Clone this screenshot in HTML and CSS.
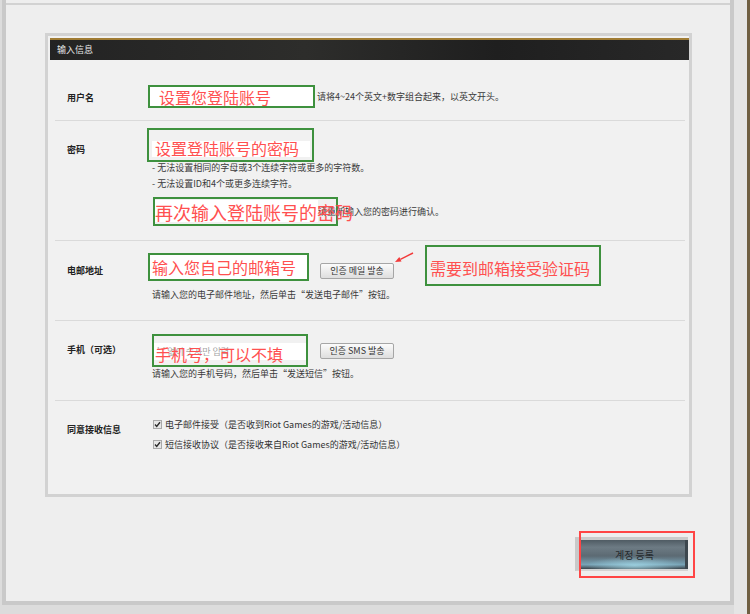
FILE: index.html
```html
<!DOCTYPE html>
<html lang="zh-CN">
<head>
    <meta charset="UTF-8">
    <meta name="viewport" content="width=device-width, initial-scale=1.0">
    <title>输入信息</title>
    <link rel="stylesheet" href="styles.css">
</head>
<body>

<div class="frame">
    <div class="topline"></div>

    <div class="panel">
        <div class="panel-head">输入信息</div>

        <!-- 用户名 -->
        <div class="row row-id">
            <div class="label">用户名</div>
            <div class="field">
                <div class="line">
                    <div class="mark mark-id"><span class="note">设置您登陆账号</span></div>
                    <span class="hint hint-side">请将4~24个英文+数字组合起来，以英文开头。</span>
                </div>
            </div>
        </div>

        <!-- 密码 -->
        <div class="row row-pw">
            <div class="label">密码</div>
            <div class="field">
                <div class="mark mark-pw"><span class="note">设置登陆账号的密码</span></div>
                <div class="bullets">
                    <div>- 无法设置相同的字母或3个连续字符或更多的字符数。</div>
                    <div>- 无法设置ID和4个或更多连续字符。</div>
                </div>
                <div class="line">
                    <div class="mark mark-re"><span class="note note-big">再次输入登陆账号的密码</span></div>
                    <span class="hint hint-under">请重新输入您的密码进行确认。</span>
                </div>
            </div>
        </div>

        <!-- 电邮地址 -->
        <div class="row row-mail">
            <div class="label">电邮地址</div>
            <div class="field">
                <div class="line">
                    <div class="mark mark-mail"><span class="note">输入您自己的邮箱号</span></div>
                    <button class="btn btn-mail">인증 메일 발송</button>
                    <svg class="arrow" width="20" height="12" viewBox="0 0 20 12">
                        <path d="M19 1 L6.4 7.3" stroke="#f23a3a" stroke-width="1.4" fill="none"/>
                        <path d="M1 10 L5.3 5.1 L7.5 9.5 Z" fill="#f23a3a"/>
                    </svg>
                    <div class="mark mark-tip"><span class="note">需要到邮箱接受验证码</span></div>
                </div>
                <div class="hint hint-block hint-mail">请输入您的电子邮件地址，然后单击“发送电子邮件”按钮。</div>
            </div>
        </div>

        <!-- 手机 -->
        <div class="row row-phone">
            <div class="label">手机（可选）</div>
            <div class="field">
                <div class="line">
                    <div class="mark mark-phone">
                        <div class="placeholder">'-' 없이 숫자만 입력</div>
                        <span class="note note-over">手机号，可以不填</span>
                    </div>
                    <button class="btn btn-sms">인증 SMS 발송</button>
                </div>
                <div class="hint hint-block hint-phone">请输入您的手机号码，然后单击“发送短信”按钮。</div>
            </div>
        </div>

        <!-- 同意接收信息 -->
        <div class="row row-agree">
            <div class="label">同意接收信息</div>
            <div class="field">
                <label class="check">
                    <svg width="9" height="9" viewBox="0 0 9 9"><rect x="0.5" y="0.5" width="8" height="8" fill="#e6e6e6" stroke="#a9a9a9"/><path d="M2 4.6 L3.7 6.4 L7 2.2" stroke="#2b2b2b" stroke-width="1.4" fill="none"/></svg>
                    电子邮件接受（是否收到Riot Games的游戏/活动信息）
                </label>
                <label class="check">
                    <svg width="9" height="9" viewBox="0 0 9 9"><rect x="0.5" y="0.5" width="8" height="8" fill="#e6e6e6" stroke="#a9a9a9"/><path d="M2 4.6 L3.7 6.4 L7 2.2" stroke="#2b2b2b" stroke-width="1.4" fill="none"/></svg>
                    短信接收协议（是否接收来自Riot Games的游戏/活动信息）
                </label>
            </div>
        </div>
    </div>

    <div class="actions">
        <button class="submit">계정 등록<span class="submit-mark"></span></button>
    </div>
</div>
<div class="side"></div>

</body>
</html>
```

FILE: styles.css
```css
body {
    margin: 0;
    height: 614px;
    display: flex;
    overflow: hidden;
    background-color: #dcdcdc;
    font-family: "Noto Sans CJK SC", "Liberation Sans", sans-serif;
    color: #333;
}
.frame {
    box-sizing: border-box;
    width: 732px;
    height: 605px;
    margin-left: 2px;
    border: 4px solid #c9c9c9;
    border-top: 0;
    background-color: #eeeeee;
}
.side {
    flex: 1;
    background-color: #e5e5e5;
    border-right: 3px solid #6f5f42;
}
.topline {
    height: 2px;
    margin-top: 3px;
    background-color: #d2d2d2;
}

/* form panel */
.panel {
    box-sizing: border-box;
    width: 647px;
    height: 464px;
    margin: 28px 0 0 39px;
    padding: 2px 0 0 2px;
    border: 3px solid #d2d2d2;
    background-color: #f1f1f1;
}
.panel-head {
    height: 20px;
    padding-left: 7px;
    border-top: 2px solid #a07c34;
    background: linear-gradient(90deg, #232323, #2d2d2b 40%, #1f1f1f 70%, #282828);
    color: #e6e6e6;
    font-size: 9px;
    line-height: 20px;
}
.row {
    box-sizing: border-box;
    display: flex;
    margin: 0 4px 0 5px;
    padding-left: 12px;
    border-top: 1px solid #dadada;
}
.label {
    flex: none;
    width: 81px;
    font-size: 9px;
    font-weight: bold;
    line-height: 14px;
    color: #222;
}
.field {
    flex: 1;
}
.line {
    display: flex;
    align-items: flex-start;
}

.row-id { height: 60px; padding-top: 25px; border-top: 0; }
.row-id .label { padding-top: 6px; }
.row-id .line { align-items: center; }
.row-pw { height: 120px; padding-top: 7px; }
.row-pw .label { padding-top: 15px; }
.row-mail { height: 80px; padding-top: 12px; }
.row-mail .label { padding-top: 11px; }
.row-phone { height: 80px; padding-top: 13px; }
.row-phone .label { padding-top: 9px; }
.row-agree { padding-top: 13px; }
.row-agree .label { padding-top: 9px; }

/* green annotation boxes */
.mark {
    box-sizing: border-box;
    flex: none;
    display: flex;
    align-items: center;
    border: 2px solid #3e913e;
}
.note {
    color: #ff5050;
    font-size: 16px;
    line-height: 1;
    white-space: nowrap;
}
.note-big {
    font-size: 18px;
}
.mark-id {
    width: 167px;
    height: 23px;
    padding-left: 9px;
    background-color: #fff;
}
.mark-pw {
    width: 167px;
    height: 34px;
    margin-left: -1px;
    padding: 6px 0 0 6px;
    background: linear-gradient(#fff, #fff) no-repeat 3px 11px / 158px 16px;
}
.mark-re {
    position: relative;
    z-index: 1;
    width: 185px;
    height: 29px;
    margin: 5px 0 0 5px;
    background: linear-gradient(#fff, #fff) no-repeat 0 1px / 163px 22px;
}
.mark-mail {
    width: 161px;
    height: 28px;
    padding-left: 2px;
    background-color: #fff;
}
.mark-tip {
    width: 176px;
    height: 41px;
    margin: -8px 0 0 11px;
    padding: 4px 0 0 3px;
}
.mark-phone {
    position: relative;
    display: block;
    width: 156px;
    height: 33px;
    margin-left: 4px;
}
.placeholder {
    height: 17px;
    margin: 7px 0 0;
    padding-left: 3px;
    background-color: #fff;
    color: #a5a5a5;
    font-family: "Noto Sans CJK KR", sans-serif;
    font-size: 9px;
    line-height: 17px;
}
.note-over {
    position: absolute;
    left: 1px;
    top: 10px;
}

/* texts */
.hint {
    font-size: 9px;
    line-height: 16px;
    color: #3a3a3a;
    white-space: nowrap;
}
.hint-side {
    margin-left: 2px;
}
.hint-under {
    position: relative;
    margin: 12px 0 0 -20px;
}
.hint-block {
    margin-left: 4px;
}
.hint-mail { margin-top: 1px; }
.hint-phone { margin-top: -1px; }
.bullets {
    margin: -2px 0 0 4px;
    font-size: 9px;
    line-height: 16px;
    color: #3a3a3a;
}

/* small buttons */
.btn {
    box-sizing: border-box;
    flex: none;
    width: 74px;
    height: 16px;
    padding: 0;
    border: 1px solid #a6a6a6;
    border-radius: 2px;
    background: linear-gradient(#fbfbfb, #dedede);
    color: #333;
    font-family: "Noto Sans CJK KR", sans-serif;
    font-size: 9px;
    line-height: 14px;
}
.btn-mail { margin: 10px 0 0 11px; }
.btn-sms { margin: 9px 0 0 12px; }
.arrow {
    flex: none;
    margin-top: -1px;
}

/* checkboxes */
.check {
    display: flex;
    align-items: center;
    height: 20px;
    margin-left: 5px;
    font-size: 9px;
    color: #333;
    white-space: nowrap;
}
.check svg {
    margin-right: 3px;
}

/* submit */
.actions {
    display: flex;
    justify-content: flex-end;
    margin-top: 40px;
    padding-right: 42px;
}
.submit {
    position: relative;
    box-sizing: border-box;
    width: 113px;
    height: 34px;
    padding: 0;
    border: 0;
    border-left: 6px solid #c9c9c9;
    border-top: 3px solid #cbcbcb;
    border-bottom: 2px solid #d4d4d4;
    background:
        radial-gradient(ellipse 45% 30% at 50% 88%, rgba(170, 225, 240, 0.7), rgba(170, 225, 240, 0) 100%),
        linear-gradient(#4f5b63, #6d7b84 25%, #5c6a73 55%, #78a3b6 85%, #3a434a);
    box-shadow: inset -3px 0 0 #3d474e;
    color: #262b2f;
    font-family: "Noto Sans CJK KR", sans-serif;
    font-size: 10px;
}
.submit-mark {
    position: absolute;
    left: -2px;
    top: -9px;
    box-sizing: border-box;
    width: 116px;
    height: 47px;
    border: 2px solid #ff4545;
}
```
